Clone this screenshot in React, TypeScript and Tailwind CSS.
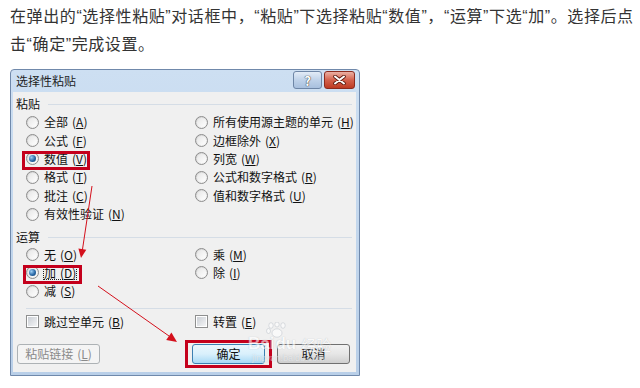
import React from 'react';

type Opt = { label: string; key: string; checked?: boolean; box?: 'v' | 'd' };

const leftPaste: Opt[] = [
  { label: '全部', key: 'A' },
  { label: '公式', key: 'F' },
  { label: '数值', key: 'V', checked: true, box: 'v' },
  { label: '格式', key: 'T' },
  { label: '批注', key: 'C' },
  { label: '有效性验证', key: 'N' },
];

const rightPaste: Opt[] = [
  { label: '所有使用源主题的单元', key: 'H' },
  { label: '边框除外', key: 'X' },
  { label: '列宽', key: 'W' },
  { label: '公式和数字格式', key: 'R' },
  { label: '值和数字格式', key: 'U' },
];

const leftOp: Opt[] = [
  { label: '无', key: 'O' },
  { label: '加', key: 'D', checked: true, box: 'd' },
  { label: '减', key: 'S' },
];

const rightOp: Opt[] = [
  { label: '乘', key: 'M' },
  { label: '除', key: 'I' },
];

const Radio = ({ checked }: { checked?: boolean }) => (
  <span className="w-[13px] h-[13px] rounded-full border border-[#8d8d8d] bg-linear-to-br from-[#cfcfcf] to-[#fbfbfb] flex items-center justify-center shrink-0">
    <span className="w-[9px] h-[9px] rounded-full bg-linear-to-br from-[#e6e6e6] to-[#ffffff] flex items-center justify-center">
      {checked && (
        <span className="w-[7px] h-[7px] rounded-full bg-[radial-gradient(circle_at_35%_35%,#9fd0f5,#2a69a8_55%,#143e6b)]" />
      )}
    </span>
  </span>
);

const Check = () => (
  <span className="w-[13px] h-[13px] border border-[#8e8f8f] bg-white flex items-center justify-center shrink-0">
    <span className="w-[9px] h-[9px] bg-linear-to-br from-[#cbcfd5] to-[#f4f5f6]" />
  </span>
);

const Key = ({ k }: { k: string }) => (
  <span className="ml-[4px]">
    (<span className="underline underline-offset-[1px]">{k}</span>)
  </span>
);

const RadioRow = ({ o }: { o: Opt }) => (
  <div className="relative h-[18.4px] flex items-center gap-[5px]">
    <Radio checked={o.checked} />
    <span className={o.box === 'd' ? 'border border-dotted border-[#222] leading-[13px] -ml-[1px]' : ''}>
      {o.label}
      <Key k={o.key} />
    </span>
    {o.box === 'v' && (
      <span className="absolute -left-[4px] top-[1px] w-[68px] h-[19px] border-[3px] border-[#c4001c]" />
    )}
    {o.box === 'd' && (
      <span className="absolute -left-[3px] top-[1px] w-[59px] h-[19px] border-[3px] border-[#c4001c]" />
    )}
  </div>
);

const GroupLabel = ({ text }: { text: string }) => (
  <div className="h-[16px] flex items-center pl-[3px]">
    <span>{text}</span>
    <span className="flex-1 h-px bg-[#d5dde6] ml-[8px] mr-[4px]" />
  </div>
);

export default function App() {
  return (
    <div className="w-[640px] h-[388px] bg-white overflow-hidden pl-[10px] pt-[3px] font-['Liberation_Sans','Noto_Sans_CJK_SC',sans-serif]">
      <p className="text-[16px] leading-[28px] text-[#333] tracking-[0.6px] w-[626px]">
        在弹出的“选择性粘贴”对话框中，“粘贴”下选择粘贴“数值”，“运算”下选“加”。选择后点击“确定”完成设置。
      </p>

      <div className="relative mt-[10px] w-[350px] border border-[#7089ab] rounded-t-[4px] bg-linear-to-b from-[#cddff2] to-[#b9cfe8] text-[12px] text-black font-['Noto_Sans_CJK_SC',sans-serif]">
        {/* title bar */}
        <div className="h-[22px] flex items-start pl-[5px] pr-[4px]">
          <span className="mt-[4px] leading-[14px] text-[#1e1e1e]">选择性粘贴</span>
          <div className="ml-auto flex gap-[2px] mt-[1px]">
            <div className="w-[29px] h-[18px] rounded-[3px] border border-[#6e86a6] bg-linear-to-b from-[#e3ecf7] via-[#bfd2e9] to-[#a8c0de] flex items-center justify-center">
              <span className="text-white font-bold text-[13px] leading-none [text-shadow:0_0_1px_#333,0_0_1px_#333]">?</span>
            </div>
            <div className="w-[31px] h-[18px] rounded-[3px] border border-[#8c2b1e] bg-linear-to-b from-[#eab0a4] via-[#d3614c] to-[#bd3a22] flex items-center justify-center">
              <svg width="13" height="10" viewBox="0 0 13 10">
                <path d="M2 1.5 L11 8.5 M11 1.5 L2 8.5" stroke="#5a1a10" strokeWidth="3.6" strokeLinecap="round" />
                <path d="M2 1.5 L11 8.5 M11 1.5 L2 8.5" stroke="#ffffff" strokeWidth="2" strokeLinecap="round" />
              </svg>
            </div>
          </div>
        </div>

        {/* body */}
        <div className="ml-[2px] mr-[3px] mb-[3px] bg-[#f0f0f0] pt-[4px] pb-[4px] text-[#111]">
          <GroupLabel text="粘贴" />
          <div className="mt-[1px] flex pl-[13px]">
            <div className="w-[169px]">
              {leftPaste.map((o) => (
                <RadioRow key={o.key} o={o} />
              ))}
            </div>
            <div className="flex-1">
              {rightPaste.map((o) => (
                <RadioRow key={o.key} o={o} />
              ))}
            </div>
          </div>

          <div className="mt-[6px]">
            <GroupLabel text="运算" />
          </div>
          <div className="flex pl-[13px]">
            <div className="w-[169px]">
              {leftOp.map((o) => (
                <RadioRow key={o.key} o={o} />
              ))}
            </div>
            <div className="flex-1">
              {rightOp.map((o) => (
                <RadioRow key={o.key} o={o} />
              ))}
            </div>
          </div>

          <div className="mt-[7px] h-px bg-[#d5dde6] ml-[13px] mr-[4px]" />

          <div className="mt-[5px] h-[16px] flex items-center pl-[13px]">
            <div className="w-[169px] flex items-center gap-[5px]">
              <Check />
              <span>
                跳过空单元
                <Key k="B" />
              </span>
            </div>
            <div className="flex items-center gap-[5px]">
              <Check />
              <span>
                转置
                <Key k="E" />
              </span>
            </div>
          </div>

          <div className="mt-[10px] h-[28px] flex items-center">
            <button className="ml-[4px] w-[83px] h-[20px] rounded-[3px] border border-[#adb2b5] bg-[#f4f4f4] text-[#8a8a8a] leading-none">
              粘贴链接
              <Key k="L" />
            </button>
            <div className="ml-auto mr-[6px] flex items-center gap-[5px]">
              <div className="border-[3px] border-[#c4001c] px-[4px] py-[1px]">
                <button className="w-[73px] h-[20px] rounded-[3px] border border-[#3c7fb1] bg-linear-to-b from-[#eaf6fd] via-[#d9f0fc] to-[#a7d9f5] leading-none">
                  确定
                </button>
              </div>
              <button className="w-[73px] h-[20px] rounded-[3px] border border-[#707070] bg-linear-to-b from-[#f2f2f2] via-[#e6e6e6] to-[#cfcfcf] leading-none">
                取消
              </button>
            </div>
          </div>
        </div>

        {/* Baidu watermark, lies over the dialog */}
        <div className="absolute left-[237px] top-[252px] pointer-events-none select-none opacity-60">
          <svg className="absolute left-[18px] top-0" width="22" height="16" viewBox="0 0 22 16">
            <g fill="#ffffff" stroke="#a7b0ba" strokeWidth="0.6">
              <ellipse cx="5" cy="3.5" rx="2.2" ry="2.8" />
              <ellipse cx="11" cy="2.5" rx="2.2" ry="2.5" />
              <ellipse cx="17" cy="3.5" rx="2.2" ry="2.8" />
              <ellipse cx="2.5" cy="9" rx="2" ry="2.5" />
              <ellipse cx="11" cy="11" rx="5" ry="4.2" />
            </g>
          </svg>
          <div className="pt-[13px] flex items-end font-['Liberation_Sans',sans-serif] font-bold text-[17px] leading-none text-white [text-shadow:0_0_1px_#8f99a4]">
            <span>Bai</span>
            <span className="ml-[1px]">du</span>
            <span className="ml-[5px] text-[15px] font-normal font-['Noto_Sans_CJK_SC',sans-serif]">经验</span>
          </div>
          <div className="mt-[2px] ml-[4px] text-[9px] leading-none text-white/80 [text-shadow:0_0_1px_#9aa3ad] font-['Liberation_Sans',sans-serif]">
            jingyan.baidu.com
          </div>
        </div>

        {/* annotation arrows */}
        <svg className="absolute left-0 top-0 pointer-events-none" width="350" height="307" viewBox="0 0 350 307">
          <line x1="81" y1="116" x2="71.4" y2="180" stroke="#d4101c" strokeWidth="1" />
          <polygon points="70,188 75.3,179.7 67.4,178.5" fill="#d4101c" />
          <line x1="87" y1="216" x2="158" y2="266" stroke="#d4101c" strokeWidth="1" />
          <polygon points="166,272 155.2,269.9 160.4,262.5" fill="#d4101c" />
        </svg>
      </div>
    </div>
  );
}
